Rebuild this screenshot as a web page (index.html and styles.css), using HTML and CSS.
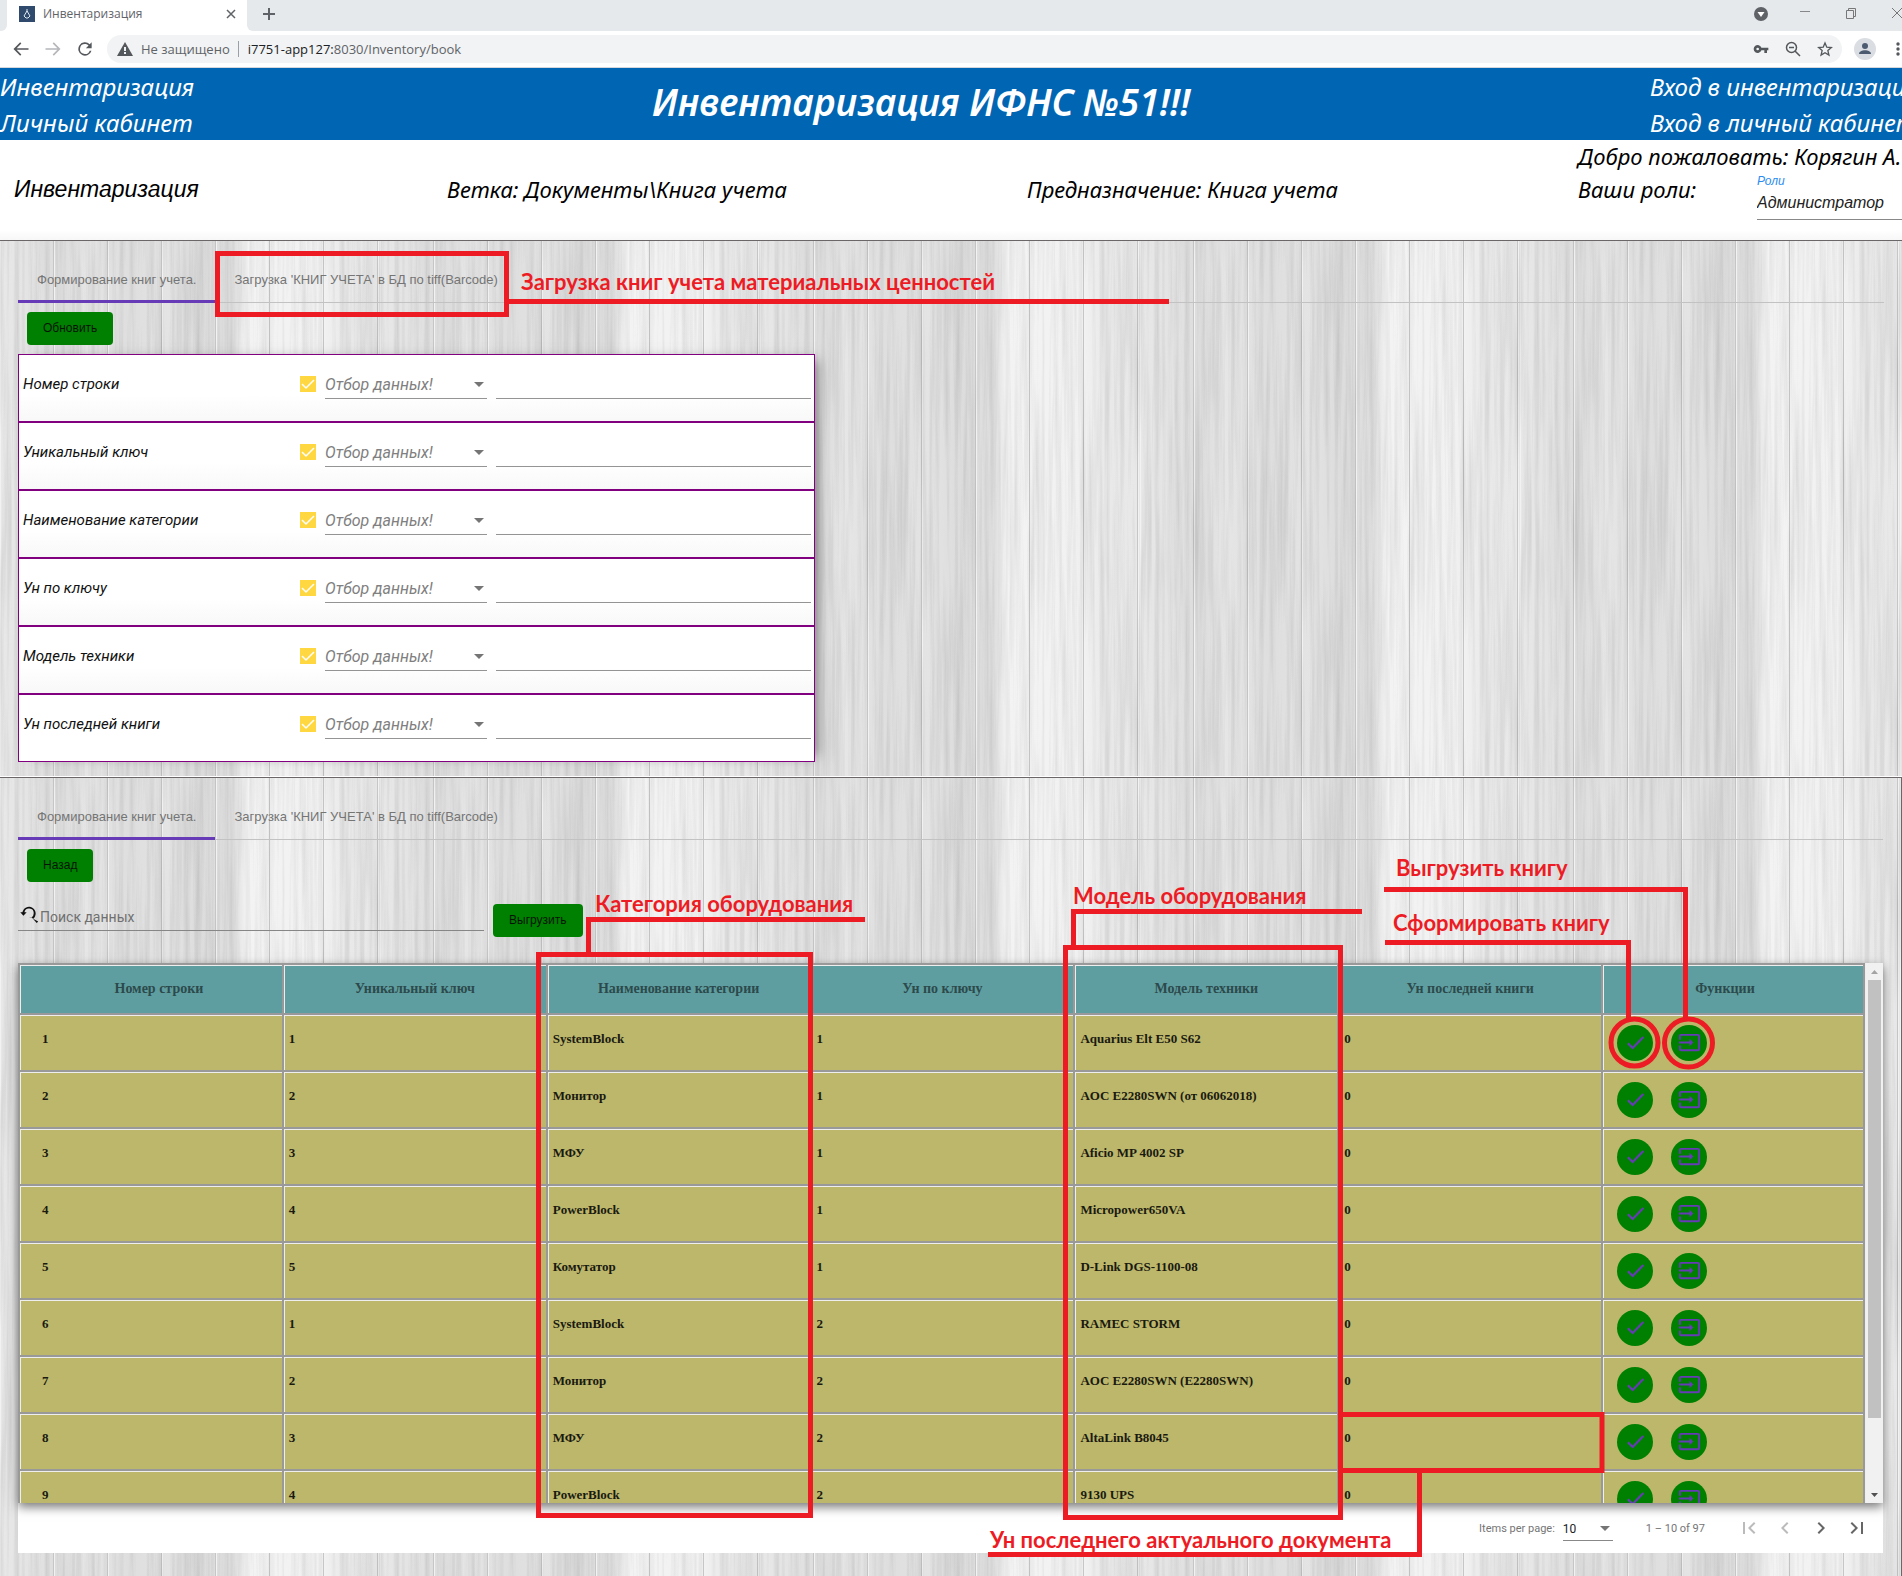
FILE: index.html
```html
<!DOCTYPE html>
<html lang="ru">
<head>
<meta charset="utf-8">
<title>Инвентаризация</title>
<link rel="stylesheet" href="styles.css">
</head>
<body>
<svg class="defs" aria-hidden="true">
  <symbol id="i-check" viewBox="0 0 24 24"><path d="M9 16.2 4.8 12l-1.600 1.600L9 19.400 21 7l-1.600-1.600z"/></symbol>
  <symbol id="i-exit" viewBox="0 0 24 24"><path d="M21 3H3a2 2 0 0 0-2 2v4h2V5h18v14H3v-4H1v4a2 2 0 0 0 2 2h18a2 2 0 0 0 2-2V5a2 2 0 0 0-2-2zM12 16l4-4-4-4v3H1v2h11z"/></symbol>
</svg>
<div class="screen">
  <div class="tabstrip">
    <div class="tab-edge"></div>
    <div class="browser-tab">
      <svg width="16" height="16" viewBox="0 0 16 16"><path fill="#2f4a6d" d="M0 0h16v16H0z"/><path fill="none" stroke="#dfe8f2" d="M8 3v3M8 5l-3 5 2 2h2l2-2-3-5"/></svg>
      <span>Инвентаризация</span>
      <svg class="close" width="10" height="10" viewBox="0 0 10 10"><path d="m1 1 8 8M9 1 1 9" stroke="#5f6368" stroke-width="1.500"/></svg>
    </div>
    <div class="strip-rest">
      <svg width="12" height="12" viewBox="0 0 12 12"><path d="M6 0v12M0 6h12" stroke="#5f6368" stroke-width="2"/></svg>
      <div class="window-buttons">
        <svg width="14" height="14" viewBox="0 0 14 14"><circle cx="7" cy="7" r="7" fill="#5f6368"/><path d="M3.500 5h7L7 10z" fill="#fff"/></svg>
        <svg width="10" height="14" viewBox="0 0 10 14"><path d="M0 4.500h10" stroke="#888"/></svg>
        <svg width="10" height="14" viewBox="0 0 10 14"><path fill="none" stroke="#777" d="M.5 3.500h7v8h-7zM2.500 3.500v-2h7v8h-2"/></svg>
        <svg width="10" height="14" viewBox="0 0 10 14"><path stroke="#777" d="m0 1 10 10M10 1 0 11"/></svg>
      </div>
    </div>
  </div>
  <div class="toolbar">
    <svg width="20" height="20" viewBox="0 0 24 24" fill="#54575b"><path d="M21 11H6.800l5.600-5.600L11 4l-8 8 8 8 1.400-1.400L6.800 13H21z"/></svg>
    <svg width="20" height="20" viewBox="0 0 24 24" fill="#b5b7ba"><path d="M3 11h14.200l-5.600-5.600L13 4l8 8-8 8-1.400-1.400 5.600-5.600H3z"/></svg>
    <svg width="20" height="20" viewBox="0 0 24 24" fill="#54575b"><path d="M17.650 6.350A8 8 0 1 0 19.730 14h-2.080A6 6 0 1 1 12 6c1.660 0 3.140.69 4.220 1.780L13 11h7V4z"/></svg>
    <div class="omnibox">
      <svg width="16" height="16" viewBox="0 0 16 16"><path fill="#54575b" d="M8 1 0 15h16z"/><path stroke="#f1f3f4" stroke-width="2" d="M8 6v4M8 11v2"/></svg>
      <span class="insecure">Не защищено</span>
      <span class="address"><b>i7751-app127:</b>8030/Inventory/book</span>
      <div class="omni-icons">
        <svg width="16" height="16" viewBox="0 0 24 24" fill="#54575b"><path d="M12.650 10a6 6 0 1 0 0 4H17v4h4v-4h2v-4zM7 14a2 2 0 1 1 0-4 2 2 0 0 1 0 4z"/></svg>
        <svg width="16" height="16" viewBox="0 0 16 16" fill="none" stroke="#54575b" stroke-width="1.500"><circle cx="6.500" cy="6.500" r="5"/><path d="m10 10 5 5M4 6.500h5"/></svg>
        <svg width="16" height="16" viewBox="0 0 24 24" fill="none" stroke="#54575b" stroke-width="2"><path d="m12 3 2.700 6.300 6.800.6-5.200 4.500 1.600 6.700L12 17.500l-5.900 3.600 1.600-6.700-5.200-4.500 6.800-.6z"/></svg>
      </div>
    </div>
    <svg width="22" height="22" viewBox="0 0 22 22"><circle cx="11" cy="11" r="11" fill="#dadde2"/><circle cx="11" cy="8" r="3" fill="#4d5b70"/><path d="M5 16c0-5 12-5 12 0z" fill="#4d5b70"/></svg>
    <svg width="4" height="16" viewBox="0 0 4 16" fill="#54575b"><circle cx="2" cy="3" r="1.700"/><circle cx="2" cy="8" r="1.700"/><circle cx="2" cy="13" r="1.700"/></svg>
  </div>

  <header class="site-header">
    <nav><a href="#">Инвентаризация</a><a href="#">Личный кабинет</a></nav>
    <h1>Инвентаризация ИФНС №51!!!</h1>
    <nav><a href="#">Вход в инвентаризацию</a><a href="#">Вход в личный кабинет</a></nav>
  </header>
  <div class="info">
    <div class="info-name">Инвентаризация</div>
    <div>Ветка: Документы\Книга учета</div>
    <div>Предназначение: Книга учета</div>
    <div class="user">
      <div>Добро пожаловать: Корягин А.С</div>
      <div class="roles"><span>Ваши роли:</span>
        <div class="role-field"><label for="role">Роли</label><select id="role"><option>Администратор</option></select></div>
      </div>
    </div>
  </div>

  <section class="wood upper">
    <div class="tabs"><button class="active">Формирование книг учета.</button><button>Загрузка 'КНИГ УЧЕТА' в БД по tiff(Barcode)</button></div>
    <button class="green">Обновить</button>
    <div class="filters">
      <div class="filter"><label for="f1">Номер строки</label><input type="checkbox" aria-label="Номер строки" checked><select aria-label="Отбор"><option>Отбор данных!</option></select><input type="text" id="f1"></div>
      <div class="filter"><label for="f2">Уникальный ключ</label><input type="checkbox" aria-label="Уникальный ключ" checked><select aria-label="Отбор"><option>Отбор данных!</option></select><input type="text" id="f2"></div>
      <div class="filter"><label for="f3">Наименование категории</label><input type="checkbox" aria-label="Наименование категории" checked><select aria-label="Отбор"><option>Отбор данных!</option></select><input type="text" id="f3"></div>
      <div class="filter"><label for="f4">Ун по ключу</label><input type="checkbox" aria-label="Ун по ключу" checked><select aria-label="Отбор"><option>Отбор данных!</option></select><input type="text" id="f4"></div>
      <div class="filter"><label for="f5">Модель техники</label><input type="checkbox" aria-label="Модель техники" checked><select aria-label="Отбор"><option>Отбор данных!</option></select><input type="text" id="f5"></div>
      <div class="filter"><label for="f6">Ун последней книги</label><input type="checkbox" aria-label="Ун последней книги" checked><select aria-label="Отбор"><option>Отбор данных!</option></select><input type="text" id="f6"></div>
    </div>
  </section>

  <section class="wood lower">
    <div class="tabs"><button class="active">Формирование книг учета.</button><button>Загрузка 'КНИГ УЧЕТА' в БД по tiff(Barcode)</button></div>
    <button class="green">Назад</button>
    <div class="search-row">
      <div class="search">
        <svg width="20" height="20" viewBox="0 0 24 24"><path d="M17 17.600A8 8 0 1 0 4.100 10H1.500l3.800 4.200L9.200 10H6.500a5.600 5.600 0 1 1 5.400 6.500c1 0 2-.3 2.900-.8l6.500 7 1.700-1.600z" fill="#111"/></svg>
        <input type="text" placeholder="Поиск данных" aria-label="Поиск данных">
      </div>
      <button class="green">Выгрузить</button>
    </div>
    <div class="grid-wrap">
      <div class="grid-scroll">
        <table>
          <thead><tr><th>Номер строки</th><th>Уникальный ключ</th><th>Наименование категории</th><th>Ун по ключу</th><th>Модель техники</th><th>Ун последней книги</th><th>Функции</th></tr></thead>
          <tbody>
            <tr><td>1</td><td>1</td><td>SystemBlock</td><td>1</td><td>Aquarius Elt E50 S62</td><td>0</td><td><button aria-label="Сформировать"><svg><use href="#i-check"/></svg></button><button aria-label="Выгрузить"><svg><use href="#i-exit"/></svg></button></td></tr>
            <tr><td>2</td><td>2</td><td>Монитор</td><td>1</td><td>AOC E2280SWN (от 06062018)</td><td>0</td><td><button aria-label="Сформировать"><svg><use href="#i-check"/></svg></button><button aria-label="Выгрузить"><svg><use href="#i-exit"/></svg></button></td></tr>
            <tr><td>3</td><td>3</td><td>МФУ</td><td>1</td><td>Aficio MP 4002 SP</td><td>0</td><td><button aria-label="Сформировать"><svg><use href="#i-check"/></svg></button><button aria-label="Выгрузить"><svg><use href="#i-exit"/></svg></button></td></tr>
            <tr><td>4</td><td>4</td><td>PowerBlock</td><td>1</td><td>Micropower650VA</td><td>0</td><td><button aria-label="Сформировать"><svg><use href="#i-check"/></svg></button><button aria-label="Выгрузить"><svg><use href="#i-exit"/></svg></button></td></tr>
            <tr><td>5</td><td>5</td><td>Комутатор</td><td>1</td><td>D-Link DGS-1100-08</td><td>0</td><td><button aria-label="Сформировать"><svg><use href="#i-check"/></svg></button><button aria-label="Выгрузить"><svg><use href="#i-exit"/></svg></button></td></tr>
            <tr><td>6</td><td>1</td><td>SystemBlock</td><td>2</td><td>RAMEC STORM</td><td>0</td><td><button aria-label="Сформировать"><svg><use href="#i-check"/></svg></button><button aria-label="Выгрузить"><svg><use href="#i-exit"/></svg></button></td></tr>
            <tr><td>7</td><td>2</td><td>Монитор</td><td>2</td><td>AOC E2280SWN (E2280SWN)</td><td>0</td><td><button aria-label="Сформировать"><svg><use href="#i-check"/></svg></button><button aria-label="Выгрузить"><svg><use href="#i-exit"/></svg></button></td></tr>
            <tr><td>8</td><td>3</td><td>МФУ</td><td>2</td><td>AltaLink B8045</td><td>0</td><td><button aria-label="Сформировать"><svg><use href="#i-check"/></svg></button><button aria-label="Выгрузить"><svg><use href="#i-exit"/></svg></button></td></tr>
            <tr><td>9</td><td>4</td><td>PowerBlock</td><td>2</td><td>9130 UPS</td><td>0</td><td><button aria-label="Сформировать"><svg><use href="#i-check"/></svg></button><button aria-label="Выгрузить"><svg><use href="#i-exit"/></svg></button></td></tr>
          </tbody>
        </table>
      </div>
      <div class="scrollbar" aria-hidden="true">
        <svg width="17" height="17" viewBox="0 0 17 17"><path d="M5 11h7L8.500 7z" fill="#a3a3a3"/></svg>
        <div class="thumb"></div>
        <svg width="17" height="17" viewBox="0 0 17 17"><path d="M5 7h7l-3.500 4z" fill="#505050"/></svg>
      </div>
    </div>
    <div class="paginator">
      <label for="pp">Items per page:</label>
      <select id="pp"><option>10</option></select>
      <span class="range">1 – 10 of 97</span>
      <button aria-label="First" disabled><svg viewBox="0 0 24 24"><path d="M18.410 16.590 13.820 12l4.590-4.590L17 6l-6 6 6 6zM6 6h2v12H6z"/></svg></button>
      <button aria-label="Previous" disabled><svg viewBox="0 0 24 24"><path d="M15.410 7.410 14 6l-6 6 6 6 1.410-1.410L10.830 12z"/></svg></button>
      <button aria-label="Next"><svg viewBox="0 0 24 24"><path d="M10 6 8.590 7.410 13.170 12l-4.580 4.590L10 18l6-6z"/></svg></button>
      <button aria-label="Last"><svg viewBox="0 0 24 24"><path d="M5.590 7.410 10.180 12l-4.590 4.590L7 18l6-6-6-6zM16 6h2v12h-2z"/></svg></button>
    </div>
  </section>

  <svg class="marks" viewBox="0 0 1902 1576" fill="none" stroke="#ed1c24" stroke-width="5" aria-hidden="true">
    <path d="M217.500 253.500h289v61h-289zM504 301.500h665"/>
    <path d="M538.500 954.500h272v561h-272zM588.500 954v-34.500H865"/>
    <path d="M1065.500 947.500h275v570h-275zM1073.500 947v-35.500H1362"/>
    <path d="M1384 889.500h301.500V1018M1385 942.500h243.500V1020"/>
    <path d="M1343 1414.500h259v56h-259M1419.500 1471v83.500H988"/>
    <circle cx="1634.500" cy="1042.500" r="23.500"/><circle cx="1688.500" cy="1043" r="24"/>
  </svg>
  <p class="note n1">Загрузка книг учета материальных ценностей</p>
  <p class="note n2">Категория оборудования</p>
  <p class="note n3">Модель оборудования</p>
  <p class="note n4">Выгрузить книгу</p>
  <p class="note n5">Сформировать книгу</p>
  <p class="note n6">Ун последнего актуального документа</p>
</div>
</body>
</html>
```
FILE: styles.css
```css
* { box-sizing: border-box; }
body { margin: 0; background: #fff; font-family: Roboto, "Liberation Sans", sans-serif; }
button, input, select { font: inherit; color: inherit; margin: 0; border: 0; border-radius: 0; padding: 0; background: none; appearance: none; outline: 0; }
svg { display: block; flex: none; }
a { color: inherit; text-decoration: none; }
.defs { position: absolute; width: 0; height: 0; }
.screen { position: relative; overflow: hidden; }

/* browser chrome */
.tabstrip { display: flex; height: 31px; background: #fff; font: 12px "Open Sans", sans-serif; color: #5f6368; }
.tab-edge { width: 7px; background: #e5e9ec; border-bottom-right-radius: 6px; }
.browser-tab { width: 240px; display: flex; align-items: center; gap: 8px; padding: 0 11px 4px 12px; }
.browser-tab .close { margin-left: auto; }
.strip-rest { flex: 1; display: flex; align-items: center; padding: 0 0 4px 16px; background: #e5e9ec; border-bottom-left-radius: 6px; }
.window-buttons { display: flex; gap: 36px; margin-left: auto; }
.window-buttons svg:first-child { margin-right: -4px; }
.toolbar { display: flex; align-items: center; gap: 12px; height: 37px; padding: 0 2px 0 11px; border-bottom: 1px solid #d5d7da; font: 13px "Open Sans", sans-serif; color: #5f6368; }
.omnibox { flex: 1; display: flex; align-items: center; height: 28px; padding: 0 9px 0 10px; border-radius: 14px; background: #f1f3f4; }
.insecure { padding: 0 8px; border-right: 1px solid #9aa0a6; line-height: 16px; }
.address { padding-left: 9px; }
.address b { font-weight: 400; color: #202124; }
.omni-icons { display: flex; gap: 16px; margin-left: auto; }
.toolbar > svg:last-child { margin-left: 8px; }

/* site header */
.site-header { display: grid; grid-template-columns: 652fr 998fr 252fr; height: 72px; overflow: hidden; background: #0066b3; color: #fff; font: italic 24px/36px "Noto Sans", sans-serif; white-space: nowrap; }
.site-header nav { display: flex; flex-direction: column; min-width: 0; padding-top: 1px; }
.site-header h1 { margin: 0; font-size: 37px; line-height: 68px; font-weight: 600; }
.info { display: grid; grid-template-columns: 433fr 580fr 551fr 324fr; height: 100px; padding-left: 14px; overflow: hidden; font: italic 22px/98px "Noto Sans", sans-serif; color: #000; white-space: nowrap; background: linear-gradient(#fff 90px, #f7f7f7); }
.info > div { min-width: 0; }
.info .info-name { font-family: "Liberation Sans", sans-serif; font-size: 23px; }
.info .user { line-height: 33px; }
.roles { display: flex; position: relative; }
.role-field { position: absolute; left: 179px; top: 1px; width: 190px; display: flex; flex-direction: column; height: 46px; border-bottom: 1px solid #888; font: italic 16px "Liberation Sans", sans-serif; }
.role-field label { font-size: 12px; line-height: 14px; color: #2b8cf0; }
.role-field select { line-height: 30px; height: 30px; color: #222; }

/* wooden panels */
.wood {
  border-top: 1px solid #6b6769;
  padding: 0 18px;
  background-color: #e2e2e2;
  background-image:
    url("data:image/svg+xml,%3Csvg xmlns='http://www.w3.org/2000/svg' width='380' height='360'%3E%3Cfilter id='n' x='0' y='0' width='100%25' height='100%25'%3E%3CfeTurbulence type='fractalNoise' baseFrequency='.2 .006' numOctaves='4' seed='4' stitchTiles='stitch'/%3E%3CfeColorMatrix values='0 0 0 0 0 0 0 0 0 0 0 0 0 0 0 .18 0 0 0 -.065'/%3E%3C/filter%3E%3Crect width='380' height='360' filter='url(%23n)'/%3E%3C/svg%3E"),
    repeating-linear-gradient(90deg, #f2f2f2 0 1px, transparent 1px 53px, #c6c6c6 53px 54px),
    linear-gradient(90deg, #e8e8e8 0, #e2e2e2 40px, #dcdcdc 60px, #e6e6e6 85px, #dedede 130px, #e4e4e4 170px, #dcdcdc 200px, #e0e0e0 236px, #f3f3f3 246px, #f1f1f1 325px, #e9e9e9 345px, #e8e8e8 380px);
  background-size: 380px 360px, 380px 100%, 380px 100%;
}
.upper { height: 537px; border-bottom: 1px solid #fff; }
.lower { min-height: 799px; border-right: 1px solid #6b6769; }
.tabs { display: flex; height: 62px; border-bottom: 1px solid #c2c2c2; font: 13px "Liberation Sans", sans-serif; color: #757575; }
.tabs button { height: 62px; padding: 16px 19px 0; line-height: 46px; display: flex; }
.tabs .active { border-bottom: 3px solid #673ab7; }
.green { display: block; height: 33px; padding: 0 16px 2px; border-radius: 4px; background: #008000; color: #061406; font: 12px "Liberation Sans", sans-serif; }
.wood > .green { margin: 9px 9px 9px; }

.filters { width: 797px; border: 1px solid #800080; background: #fff; box-shadow: 8px 0 12px -6px #777; }
.filter { display: grid; grid-template-columns: 268px 16px 162px 1fr; column-gap: 9px; align-items: center; height: 68px; padding: 0 3px 9px 4px; border-bottom: 2px solid #800080; font: italic 15px Roboto, sans-serif; color: #111; background: linear-gradient(#fff 60%, #f8f8f8); }
.filter:last-child { height: 66px; border-bottom: 0; background: #fff; }
.filter input[type=checkbox] { width: 16px; height: 16px; background: #ffd740 url("data:image/svg+xml,%3Csvg xmlns='http://www.w3.org/2000/svg' viewBox='0 0 16 16'%3E%3Cpath d='m2 8 4 4 8-8' fill='none' stroke='white' stroke-width='1.500'/%3E%3C/svg%3E"); }
.filter select { height: 28px; margin-top: 3px; border-bottom: 1px solid #949494; color: #808080; font-size: 16px; background: url("data:image/svg+xml,%3Csvg xmlns='http://www.w3.org/2000/svg' viewBox='0 0 10 5'%3E%3Cpath d='M0 0h10L5 5z' fill='%23757575'/%3E%3C/svg%3E") no-repeat right 3px center / 10px 5px; }
.filter input[type=text] { width: 100%; height: 28px; margin-top: 3px; border-bottom: 1px solid #949494; }

.search-row { display: flex; gap: 9px; height: 69px; margin-top: 12px; align-items: flex-start; padding-top: 10px; }
.search { display: flex; width: 466px; height: 27px; border-bottom: 1px solid #868686; font-size: 14px; }
.search svg { margin: 0 1px; }
.search input { flex: 1; }
.search input::placeholder { color: #707070; opacity: 1; }

.grid-wrap { display: flex; height: 540px; position: relative; box-shadow: 0 4px 10px #777; }
.grid-scroll { flex: 1; overflow: hidden; background: #eee; padding-right: 1px; }
table { width: 100%; table-layout: fixed; border-collapse: separate; border-spacing: 0; font: bold 13px "Liberation Serif", serif; color: #1a1a10; }
th, td { border: 0 solid #999; border-width: 2px 0 0 2px; box-shadow: inset 1px 1px #eee; text-align: left; }
th:last-child, td:last-child { border-right-width: 2px; }
th { height: 50px; padding: 0; background: #5f9ea0; color: #2c4a4c; font-size: 14px; text-align: center; }
th:first-child { padding-left: 16px; }
th:last-child { padding-right: 16px; }
td { height: 57px; padding: 0 5px 8px; background: #bdb76b; }
td:first-child { padding-left: 22px; }
td:last-child { padding: 0 0 0 14px; }
td button { width: 36px; height: 36px; margin-right: 18px; border-radius: 50%; background: #008000; fill: #673ab7; vertical-align: middle; }
td button svg { width: 23px; height: 23px; margin: auto; }
.scrollbar { width: 17px; display: flex; flex-direction: column; background: #f1f1f1; }
.thumb { flex: none; height: 438px; margin: 0 2px; background: #c1c1c1; }
.scrollbar svg:last-child { margin-top: auto; }

.paginator { display: flex; align-items: center; justify-content: flex-end; height: 50px; padding-right: 8px; background: #fff; font-size: 11px; color: #757575; }
.paginator select { width: 50px; height: 24px; margin: 2px 33px 0 8px; border-bottom: 1px solid #888; color: #222; font-size: 12px; background: url("data:image/svg+xml,%3Csvg xmlns='http://www.w3.org/2000/svg' viewBox='0 0 10 5'%3E%3Cpath d='M0 0h10L5 5z' fill='%23757575'/%3E%3C/svg%3E") no-repeat right 3px center / 10px 5px; }
.range { margin-right: 26px; }
.paginator button { width: 36px; display: flex; justify-content: center; fill: #666; }
.paginator button:disabled { fill: #bbb; }
.paginator button svg { width: 24px; height: 24px; }

/* review marks drawn over the page */
.marks { position: absolute; left: 0; top: 0; width: 1902px; height: 1576px; pointer-events: none; }
.note { position: absolute; margin: 0; color: #ed1c24; font: bold 22px/26px Lato, sans-serif; white-space: nowrap; }
.n1 { left: 521px; top: 269px; }
.n2 { left: 595px; top: 891px; }
.n3 { left: 1073px; top: 883px; }
.n4 { left: 1396px; top: 855px; }
.n5 { left: 1393px; top: 910px; }
.n6 { left: 990px; top: 1527px; }
```
